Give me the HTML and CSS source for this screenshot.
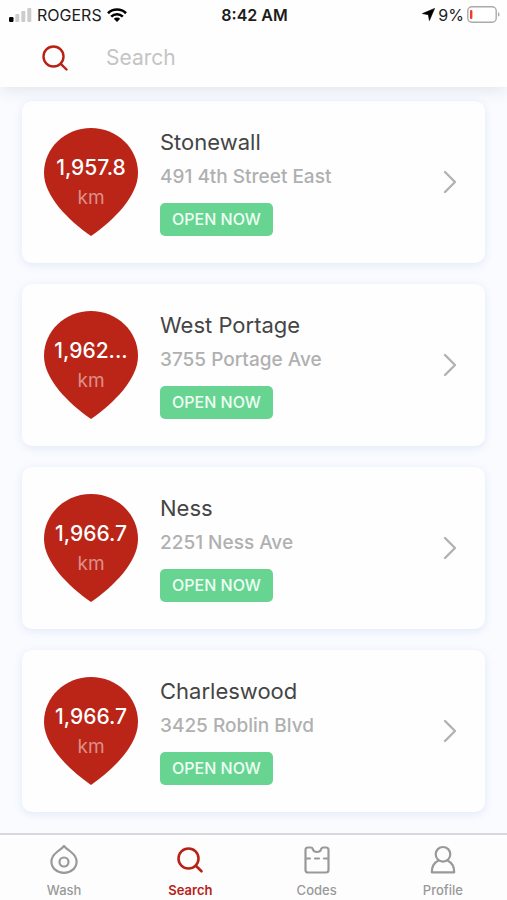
FILE: index.html
```html
<!DOCTYPE html>
<html lang="en">
<head>
<meta charset="utf-8">
<meta name="viewport" content="width=device-width, initial-scale=1">
<title>Search locations</title>
<link rel="stylesheet" href="styles.css">
</head>
<body>
<svg class="defs" aria-hidden="true">
  <symbol id="pin" viewBox="0 0 94 108"><path d="M47 0C73 0 94 20 94 45C94 68 70 92 47 108C24 92 0 68 0 45C0 20 21 0 47 0Z" fill="#ba2518"/></symbol>
  <symbol id="chevron" viewBox="0 0 14 24"><path d="M2 2L12 12L2 22" fill="none" stroke="#b2b2b2" stroke-width="2.4" stroke-linecap="round" stroke-linejoin="round"/></symbol>
  <symbol id="magnifier" viewBox="0 0 26 26"><g fill="none" stroke="currentColor" stroke-width="2.4" stroke-linecap="round"><circle cx="11.5" cy="11.5" r="10"/><path d="M18.8 18.8L24.5 24.5"/></g></symbol>
</svg>

<header class="top">
  <div class="status">
    <div class="carrier">
      <svg width="23" height="16" viewBox="0 0 23 16"><rect y="10" width="4.5" height="5" rx="1.2" fill="#000"/><g fill="#ccc"><rect x="6.3" y="7" width="4" height="8" rx="1"/><rect x="12.3" y="4" width="4" height="11" rx="1"/><rect x="18.3" y="1" width="4" height="14" rx="1"/></g></svg>
      <span>ROGERS</span>
      <svg width="20" height="14" viewBox="0 0 20 14"><g fill="none" stroke="#000" stroke-width="2.6"><path d="M1 5.2C6 .3 14 .3 19 5.2"/><path d="M4.2 8.6C7.5 5.4 12.5 5.4 15.8 8.6"/></g><path d="M10 14L6.8 10.8C8.5 9.2 11.5 9.2 13.2 10.8Z"/></svg>
    </div>
    <div class="clock">8:42 AM</div>
    <div class="power">
      <svg width="13" height="13" viewBox="0 0 13 13"><path d="M12.6.4L7.4 12.6L6.3 6.7L.4 5.6Z" stroke="#000" stroke-width=".6" stroke-linejoin="round"/></svg>
      <span>9%</span>
      <svg width="33" height="17" viewBox="0 0 33 17"><rect x=".8" y=".8" width="28.4" height="15.4" rx="4" fill="#fff" stroke="#aaa" stroke-width="1.4"/><rect x="3" y="4" width="2.4" height="9" rx="1" fill="#f03a30"/><path d="M31 6.3C33 7 33 10 31 10.7Z" fill="#aaa"/></svg>
    </div>
  </div>
  <label class="search">
    <svg class="search-icon" role="img" aria-label="Search"><use href="#magnifier"/></svg>
    <input type="search" placeholder="Search">
  </label>
</header>

<main class="list">
  <a class="card" href="#stonewall">
    <div class="pin"><svg><use href="#pin"/></svg><div class="distance"><b>1,957.8</b><span>km</span></div></div>
    <div class="info"><h2>Stonewall</h2><p>491 4th Street East</p><span class="badge">OPEN NOW</span></div>
    <svg class="chevron"><use href="#chevron"/></svg>
  </a>
  <a class="card" href="#west-portage">
    <div class="pin"><svg><use href="#pin"/></svg><div class="distance"><b>1,962...</b><span>km</span></div></div>
    <div class="info"><h2>West Portage</h2><p>3755 Portage Ave</p><span class="badge">OPEN NOW</span></div>
    <svg class="chevron"><use href="#chevron"/></svg>
  </a>
  <a class="card" href="#ness">
    <div class="pin"><svg><use href="#pin"/></svg><div class="distance"><b>1,966.7</b><span>km</span></div></div>
    <div class="info"><h2>Ness</h2><p>2251 Ness Ave</p><span class="badge">OPEN NOW</span></div>
    <svg class="chevron"><use href="#chevron"/></svg>
  </a>
  <a class="card" href="#charleswood">
    <div class="pin"><svg><use href="#pin"/></svg><div class="distance"><b>1,966.7</b><span>km</span></div></div>
    <div class="info"><h2>Charleswood</h2><p>3425 Roblin Blvd</p><span class="badge">OPEN NOW</span></div>
    <svg class="chevron"><use href="#chevron"/></svg>
  </a>
</main>

<nav class="tabs">
  <a href="#wash"><svg viewBox="0 0 30 32"><g fill="none" stroke="currentColor" stroke-width="2.2" stroke-linejoin="round"><path d="M15 2C17 4.500 19.500 6 22 8C25.500 10.800 27.600 13.500 27.600 17.500C27.600 24 22 28.800 15 28.800C8 28.800 2.400 24 2.400 17.500C2.400 13.500 4.500 10.800 8 8C10.500 6 13 4.500 15 2Z"/><circle cx="15" cy="18" r="4.500"/></g></svg>Wash</a>
  <a class="active" href="#search" aria-current="page"><svg viewBox="0 0 30 32"><g fill="none" stroke="currentColor" stroke-width="2.6" stroke-linecap="round"><circle cx="13.500" cy="14.500" r="10"/><path d="M20.800 21.800L26.500 27.300"/></g></svg>Search</a>
  <a href="#codes"><svg viewBox="0 0 30 32"><g fill="none" stroke="currentColor" stroke-width="2.200" stroke-linejoin="round" stroke-linecap="round"><path d="M6 3.500H9C10.500 3.500 10.500 4.500 11 5.500C12 8.800 18 8.800 19 5.500C19.500 4.500 19.500 3.500 21 3.500H24Q26.500 3.500 26.500 6V26Q26.500 28.500 24 28.500H6Q3.500 28.500 3.500 26V6Q3.500 3.500 6 3.500Z"/><path d="M4 14.500H8M13 14.500H17M22 14.500H26"/></g></svg>Codes</a>
  <a href="#profile"><svg viewBox="0 0 30 32"><g fill="none" stroke="currentColor" stroke-width="2.200" stroke-linejoin="round"><circle cx="15" cy="10.300" r="7.300"/><path d="M10.500 16.500C6.500 18.500 3.800 23 3.800 28.300H26.200C26.200 23 23.500 18.500 19.500 16.500"/></g></svg>Profile</a>
</nav>
</body>
</html>
```
FILE: styles.css
```css
* { box-sizing: border-box; }

body {
  margin: 0;
  height: 100vh;
  display: flex;
  flex-direction: column;
  overflow: hidden;
  background: #f9fbff;
  color: #454545;
  font-family: Inter, "Liberation Sans", sans-serif;
}

a { color: inherit; text-decoration: none; }
svg { display: block; flex: none; }
.defs { position: absolute; width: 0; height: 0; }

.top {
  position: relative;
  background: #fefefe;
  box-shadow: 0 2px 16px rgba(60, 80, 100, 0.14);
}

.status {
  display: grid;
  grid-template-columns: 1fr auto 1fr;
  align-items: center;
  height: 29px;
  padding: 0 7px 0 9px;
  color: #1c1c1c;
  font-size: 16px;
}

.carrier, .power { display: flex; align-items: center; gap: 5px; }
.power { justify-content: flex-end; gap: 3px; }
.clock { font-weight: 600; }

.search {
  display: flex;
  align-items: center;
  gap: 38px;
  height: 58px;
  padding: 0 22px 0 42px;
}

.search-icon { width: 26px; height: 26px; color: #b92117; }

.search input {
  flex: 1;
  min-width: 0;
  height: 30px;
  padding: 0 0 2px;
  border: 0;
  outline: 0;
  background: transparent;
  color: #454545;
  font: 400 21px/28px Inter, "Liberation Sans", sans-serif;
}

.search input::placeholder { color: #c4c4c4; opacity: 1; }

.list {
  flex: 1;
  min-height: 0;
  overflow: hidden;
  display: flex;
  flex-direction: column;
  gap: 21px;
  padding: 14px 22px 20px;
}

.card {
  flex: none;
  display: flex;
  align-items: center;
  gap: 22px;
  padding: 27px 28px 27px 22px;
  border-radius: 10px;
  background: #fefefe;
  box-shadow: 0 2px 8px rgba(90, 120, 200, 0.14);
}

.pin { display: grid; width: 94px; height: 108px; flex: none; }
.pin > * { grid-area: 1 / 1; }
.pin svg { width: 94px; height: 108px; }

.distance {
  position: relative;
  padding-top: 27px;
  color: #fff;
  text-align: center;
}

.distance b { display: block; font-size: 21px; line-height: 26px; font-weight: 500; }
.distance span { display: block; font-size: 19px; line-height: 34px; color: #dc8f89; }

.info { flex: 1; min-width: 0; }
.info h2 { margin: 0; font-size: 22px; line-height: 28px; font-weight: 400; }
.info p { margin: 0 0 5px; font-size: 19px; line-height: 42px; font-weight: 500; color: #b0b0b0; }

.badge {
  display: block;
  width: fit-content;
  padding: 0 12px;
  border-radius: 5px;
  background: #67d492;
  color: #effff4;
  font-size: 16px;
  line-height: 33px;
  font-weight: 500;
}

.chevron { width: 14px; height: 24px; }

.tabs {
  position: relative;
  display: grid;
  grid-template-columns: repeat(4, 1fr);
  padding: 9px 1px 0;
  border-top: 2px solid #d8d9dc;
  background: #fdfdfd;
  color: #999;
}

.tabs a {
  display: flex;
  flex-direction: column;
  align-items: center;
  gap: 4px;
  font-size: 13px;
  line-height: 20px;
  font-weight: 500;
}

.tabs svg { width: 30px; height: 32px; }
.tabs .active { color: #b92117; font-weight: 600; }
```
